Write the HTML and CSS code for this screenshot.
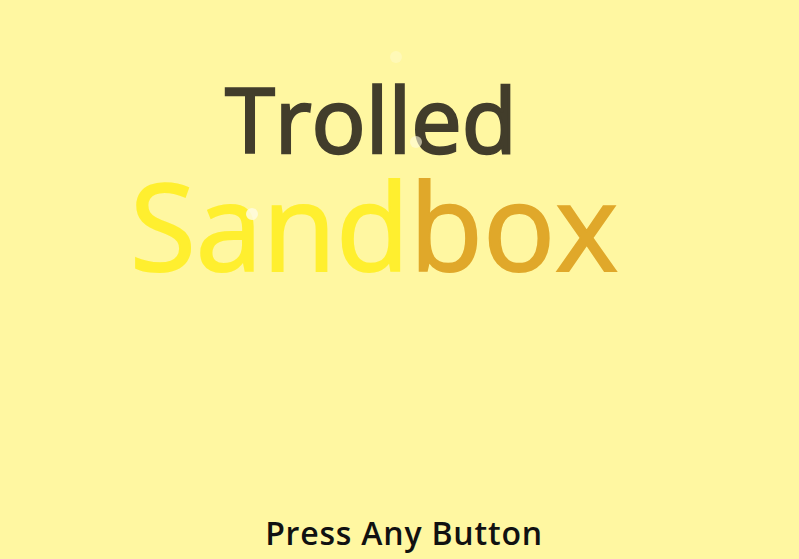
FILE: index.html
```html
<!DOCTYPE html>
<html lang="en">
<head>
<meta charset="utf-8">
<title>Trolled Sandbox</title>
<link rel="stylesheet" href="styles.css">
</head>
<body>
  <main class="screen">
    <header class="title">
      <div class="title-top">Trolled</div>
      <div class="title-bottom"><span class="sand">Sand</span><span class="box">box</span></div>
    </header>
    <p class="prompt">Press Any Button</p>
    <span class="spark spark-a"></span>
    <span class="spark spark-b"></span>
    <span class="spark spark-c"></span>
  </main>
</body>
</html>
```
FILE: styles.css
```css
html, body {
  margin: 0;
  padding: 0;
}

body {
  background: #fff7a1;
  font-family: "Open Sans", "Noto Sans", sans-serif;
}

.screen {
  position: relative;
  height: 559px;
  display: flex;
  flex-direction: column;
  align-items: center;
  overflow: hidden;
}

.title {
  padding-top: 73px;
  display: flex;
  flex-direction: column;
  align-items: center;
}

.title-top {
  font-size: 90px;
  line-height: 90px;
  font-weight: 400;
  color: #423d2b;
  -webkit-text-stroke: 2.5px currentColor;
  margin-right: 57px;
}

.title-bottom {
  font-size: 120px;
  line-height: 120px;
  font-weight: 400;
  margin-top: 2px;
  margin-right: 51px;
}

.sand {
  color: #ffef2f;
  -webkit-text-stroke: 2px currentColor;
}

.box {
  color: #e0a82a;
  -webkit-text-stroke: 2px currentColor;
}

.prompt {
  margin: auto 0 10px 9px;
  font-size: 32px;
  line-height: 32px;
  font-weight: 600;
  letter-spacing: 0.8px;
  color: #111;
}

/* floating sparkles */
.spark {
  position: absolute;
  width: 12px;
  height: 12px;
  border-radius: 50%;
  background: #fffbe0;
}

.spark-a {
  left: 390px;
  top: 51px;
  opacity: 0.35;
}

.spark-b {
  left: 410px;
  top: 136px;
  opacity: 0.6;
}

.spark-c {
  left: 246px;
  top: 208px;
  opacity: 0.85;
}
```
